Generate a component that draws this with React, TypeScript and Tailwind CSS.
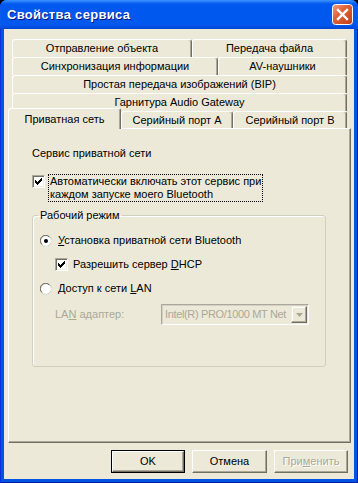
import React from 'react';

const Check = () => (
  <svg width="7" height="7" viewBox="0 0 7 7" className="block">
    <path d="M0 2h1v1h1v1h1V3h1V2h1V1h1V0h1v3H6v1H5v1H4v1H3v1H2V6H1V5H0z" fill="#000" />
  </svg>
);

const CheckBox: React.FC<{ checked?: boolean }> = ({ checked }) => (
  <div className="w-[13px] h-[13px] shrink-0 border border-t-[#ACA899] border-l-[#ACA899] border-r-white border-b-white shadow-[inset_1px_1px_0_#716F64,inset_-1px_-1px_0_#F1EFE2] bg-white flex items-center justify-center">
    {checked && <Check />}
  </div>
);

const Radio: React.FC<{ checked?: boolean }> = ({ checked }) => (
  <svg width="12" height="12" viewBox="0 0 12 12" className="shrink-0 block">
    <circle cx="6" cy="6" r="5.5" fill="#fff" stroke="#ACA899" />
    <path d="M1.8 9.2A4.6 4.6 0 0 1 9.2 1.8" fill="none" stroke="#716F64" />
    <path d="M10.2 2.8A4.6 4.6 0 0 1 2.8 10.2" fill="none" stroke="#F1EFE2" />
    {checked && <circle cx="6" cy="6" r="2" fill="#000" />}
  </svg>
);

const CloseIcon = () => (
  <svg width="21" height="21" viewBox="0 0 21 21" className="block">
    <defs>
      <linearGradient id="cg" x1="0" y1="0" x2="1" y2="1">
        <stop offset="0" stopColor="#F0A283" />
        <stop offset="0.4" stopColor="#E06238" />
        <stop offset="1" stopColor="#C03D16" />
      </linearGradient>
    </defs>
    <rect x="0.5" y="0.5" width="20" height="20" rx="3" fill="url(#cg)" stroke="#fff" />
    <path d="M6 6L15 15M15 6L6 15" stroke="#fff" strokeWidth="2.4" strokeLinecap="square" />
  </svg>
);

const tab =
  'flex items-center justify-center border-t border-l border-white border-r border-r-[#716F64] shadow-[inset_-1px_0_0_#ACA899] rounded-t-[3px] bg-[#ECE9D8] whitespace-nowrap';

export default function App() {
  return (
    <div className="w-[358px] h-[483px] bg-black font-['Liberation_Sans',Tahoma,sans-serif] text-[11px] leading-[13px] text-black select-none">
      <div className="w-full h-full flex flex-col rounded-t-[7px] overflow-hidden bg-[#0054E3] shadow-[inset_1px_0_0_#0831D9,inset_-1px_0_0_#001EA0,inset_0_-1px_0_#001EA0]">
        {/* title bar */}
        <div className="h-[29px] shrink-0 flex items-center justify-between pl-[7px] pr-[5px] bg-[#0058EE] shadow-[inset_0_3px_3px_-1px_#3D95FF,inset_0_-3px_3px_-1px_#0046D0]">
          <span className="text-white font-bold text-[13px] tracking-[0.3px] [text-shadow:1px_1px_0_#0A1883]">
            Свойства сервиса
          </span>
          <CloseIcon />
        </div>

        {/* client */}
        <div className="flex-1 mx-[4px] mb-[4px] bg-[#ECE9D8] pt-[10px] px-[4px] flex flex-col">
          <div className="w-[343px]">
            <div className="flex h-[18px] ml-[4px]">
              <div className={`${tab} w-[180px]`}>Отправление объекта</div>
              <div className={`${tab} w-[155px]`}>Передача файла</div>
            </div>
            <div className="flex h-[18px] ml-[4px]">
              <div className={`${tab} w-[206px]`}>Синхронизация информации</div>
              <div className={`${tab} w-[129px]`}>AV-наушники</div>
            </div>
            <div className="flex h-[18px] ml-[4px]">
              <div className={`${tab} w-[335px]`}>Простая передача изображений (BIP)</div>
            </div>
            <div className="flex h-[18px] ml-[4px]">
              <div className={`${tab} w-[335px]`}>Гарнитура Audio Gateway</div>
            </div>
            <div className="flex h-[17px]">
              <div className={`${tab} relative z-10 w-[113px] h-[21px] -mt-[3px] shrink-0 rounded-tr-[2px]`}>Приватная сеть</div>
              <div className={`${tab} w-[112px] shrink-0`}>Серийный порт А</div>
              <div className={`${tab} w-[114px] shrink-0`}>Серийный порт В</div>
            </div>

            {/* panel */}
            <div className="h-[315px] border border-t-white border-l-white border-r-[#716F64] border-b-[#716F64] shadow-[inset_-1px_-1px_0_#ACA899] pl-[23px] pt-[18px]">
              <div>Сервис приватной сети</div>

              <div className="flex items-start gap-[3px] mt-[15px]">
                <CheckBox checked />
                <div className="border border-dotted border-black px-[1px] -mt-[1px] whitespace-nowrap">
                  <div>Автоматически включать этот сервис при</div>
                  <div>каждом запуске моего Bluetooth</div>
                </div>
              </div>

              <fieldset className="mt-[7px] w-[294px] h-[158px] border border-[#D0D0BF] rounded-[3px] shadow-[inset_1px_1px_0_white] px-0 pb-0">
                <legend className="ml-[5px] px-[2px]">Рабочий режим</legend>
                <div className="pl-[7px] pt-[12px] flex flex-col">
                  <div className="flex items-center gap-[6px] h-[13px]">
                    <Radio checked />
                    <span>
                      <u>У</u>становка приватной сети Bluetooth
                    </span>
                  </div>
                  <div className="flex items-center gap-[5px] h-[13px] mt-[11px] pl-[15px]">
                    <CheckBox checked />
                    <span>
                      Разрешить сервер <u>D</u>HCP
                    </span>
                  </div>
                  <div className="flex items-center gap-[6px] h-[13px] mt-[11px]">
                    <Radio />
                    <span>
                      Доступ к сети <u>L</u>AN
                    </span>
                  </div>
                  <div className="flex items-center mt-[9px] pl-[15px]">
                    <span className="w-[106px] text-[#ACA899]">
                      LA<u>N</u> адаптер:
                    </span>
                    <div className="w-[148px] h-[21px] border border-t-[#ACA899] border-l-[#ACA899] border-r-white border-b-white shadow-[inset_1px_1px_0_#D4D0C8] flex items-center pl-[3px] pr-[1px]">
                      <span className="flex-1 overflow-hidden whitespace-nowrap text-[#ACA899] tracking-[-0.35px]">Intel(R) PRO/1000 MT Net</span>
                      <div className="w-[16px] h-[17px] shrink-0 border border-t-[#F1EFE2] border-l-[#F1EFE2] border-r-[#716F64] border-b-[#716F64] shadow-[inset_-1px_-1px_0_#ACA899,inset_1px_1px_0_white] flex items-center justify-center">
                        <svg width="7" height="4" viewBox="0 0 7 4">
                          <path d="M0 0h7L3.5 4z" fill="#ACA899" />
                        </svg>
                      </div>
                    </div>
                  </div>
                </div>
              </fieldset>
            </div>
          </div>

          {/* buttons */}
          <div className="flex justify-end gap-[7px] mt-[7px] pr-[2px]">
            <button className="w-[74px] h-[23px] border border-black">
              <div className="w-full h-full border border-t-white border-l-white border-r-[#716F64] border-b-[#716F64] shadow-[inset_-1px_-1px_0_#ACA899] flex items-center justify-center">
                OK
              </div>
            </button>
            <button className="w-[75px] h-[23px] border border-t-white border-l-white border-r-[#716F64] border-b-[#716F64] shadow-[inset_-1px_-1px_0_#ACA899] flex items-center justify-center">
              Отмена
            </button>
            <button className="w-[74px] h-[23px] border border-t-white border-l-white border-r-[#716F64] border-b-[#716F64] shadow-[inset_-1px_-1px_0_#ACA899] flex items-center justify-center text-[#ACA899] [text-shadow:1px_1px_0_white]">
              <span>
                При<u>м</u>енить
              </span>
            </button>
          </div>
        </div>
      </div>
    </div>
  );
}
